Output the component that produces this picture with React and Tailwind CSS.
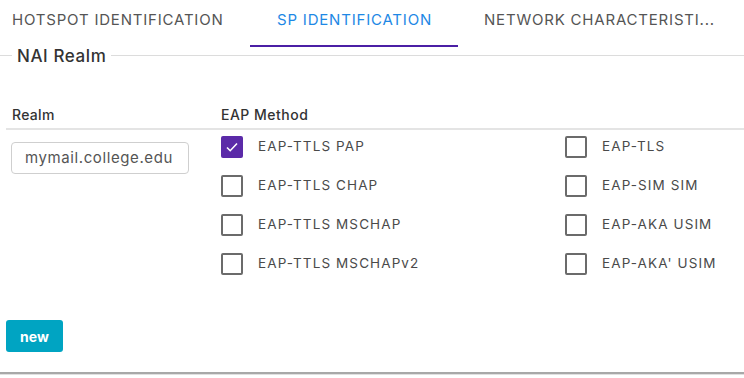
const font = { fontFamily: 'Inter, Lato, sans-serif' };

const left = ['EAP-TTLS PAP', 'EAP-TTLS CHAP', 'EAP-TTLS MSCHAP', 'EAP-TTLS MSCHAPv2'];
const right = ['EAP-TLS', 'EAP-SIM SIM', 'EAP-AKA USIM', "EAP-AKA' USIM"];

function Check({ checked, label }) {
  return (
    <div className="flex items-center h-[39px]">
      {checked ? (
        <span className="w-[22px] h-[22px] rounded-[2px] bg-[#5b2aa8] flex items-center justify-center">
          <svg width="14" height="14" viewBox="0 0 14 14" fill="none">
            <path d="M2 7.5l3.2 3.2L12 3.5" stroke="white" strokeWidth="1.6" />
          </svg>
        </span>
      ) : (
        <span className="w-[22px] h-[22px] rounded-[2px] border-2 border-[#6b6b6b] bg-white" />
      )}
      <span className="ml-[15px] text-[13.5px] text-[#4a4a4a] tracking-[1.1px]">{label}</span>
    </div>
  );
}

export default function App() {
  return (
    <div className="w-[744px] h-[378px] bg-white relative overflow-hidden" style={font}>
      <div className="flex h-[47px]">
        <div className="w-[250px] pl-3 pt-[9px] text-[15px] text-[#555] tracking-[0.8px] whitespace-nowrap">HOTSPOT IDENTIFICATION</div>
        <div className="w-[208px] border-b-2 border-[#4b1fa5] pl-[27px] pt-[9px] text-[15px] text-[#1e88e5] tracking-[0.8px] whitespace-nowrap">SP IDENTIFICATION</div>
        <div className="pl-[26px] pt-[9px] text-[15px] text-[#555] tracking-[0.8px] whitespace-nowrap">NETWORK CHARACTERISTI...</div>
      </div>
      <div className="relative mt-[8px] h-[2px] border-t border-[#dcdcdc]">
        <span className="absolute left-[12px] -top-[12px] px-[5px] bg-white text-[17px] font-medium text-[#333] tracking-[0.6px]">NAI Realm</span>
      </div>
      <div className="flex mt-[47px] ml-[6px] border-b-2 border-[#e4e4e4] h-[26px]">
        <div className="w-[215px] pl-[6px] text-[14px] font-medium text-[#333] tracking-[0.3px]">Realm</div>
        <div className="text-[14px] font-medium text-[#333] tracking-[0.5px]">EAP Method</div>
      </div>
      <div className="flex mt-[-3px]">
        <div className="w-[221px] pl-[11px] pt-[15px]">
          <div className="w-[178px] h-[32px] border border-[#cfcfcf] rounded-[4px] flex items-center px-[13px] text-[15px] text-[#555] tracking-[0.6px] whitespace-nowrap">
            mymail.college.edu
          </div>
        </div>
        <div className="w-[344px]">
          {left.map((l, i) => <Check key={l} label={l} checked={i === 0} />)}
        </div>
        <div>
          {right.map((l) => <Check key={l} label={l} />)}
        </div>
      </div>
      <button className="absolute left-[6px] top-[320px] w-[57px] h-[32px] bg-[#00a4c2] rounded-[3px] text-white font-bold text-[14px]">new</button>
      <div className="absolute left-0 right-0 top-[372px] h-[2px] bg-[#a8a8a8]" />
      <div className="absolute left-0 right-0 top-[374px] h-[1px] bg-[#e0e0e0]" />
    </div>
  );
}
